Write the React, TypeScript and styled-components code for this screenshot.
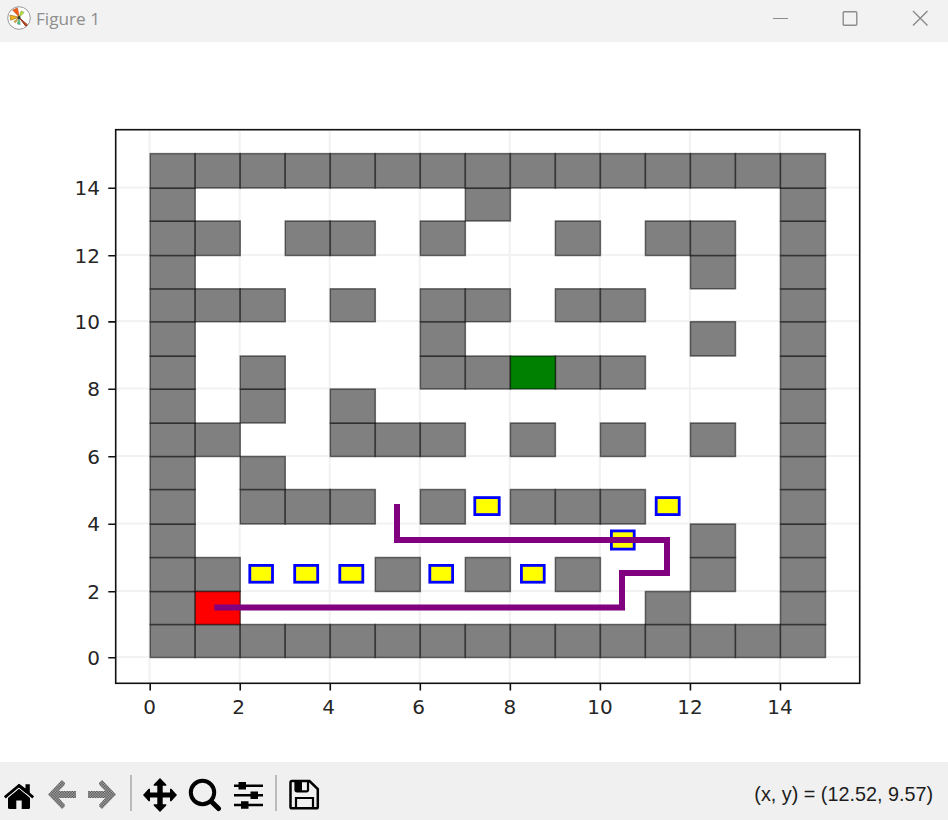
import React from 'react';
import styled, { createGlobalStyle } from 'styled-components';

const GlobalStyle = createGlobalStyle`
  * { box-sizing: border-box; }
  body { margin: 0; background: #fff; overflow: hidden; }
`;

const Window = styled.div`
  display: flex;
  flex-direction: column;
  width: 948px;
  height: 820px;
  background: #fff;
`;

const TitleBar = styled.header`
  display: flex;
  align-items: center;
  height: 42px;
  padding: 0 20px 6px 7px;
  background: #f2f2f2;
`;

const Title = styled.h1`
  flex: 1;
  margin: 1px 0 0 5px;
  font: 400 17.2px/24px "Open Sans", "Noto Sans", sans-serif;
  color: #8e8e8e;
`;

const Controls = styled.div`
  display: flex;
  gap: 54px;
`;

const Glyph = styled.svg<{ $w: number; $h: number }>`
  display: block;
  flex: none;
  width: ${(p) => p.$w}px;
  height: ${(p) => p.$h}px;
`;

const Canvas = styled.main`
  height: 720px;
`;

const Plot = styled.svg`
  display: block;
  width: 948px;
  height: 720px;
`;

const TickLabel = styled.text`
  font: 20px "DejaVu Sans", sans-serif;
  fill: #262626;
`;

const Toolbar = styled.footer`
  display: flex;
  align-items: center;
  height: 58px;
  padding: 4px 15px 0 1px;
  background: #f0f0f0;
`;

const ToolButton = styled.button<{ $w: number }>`
  display: flex;
  align-items: center;
  justify-content: center;
  width: ${(p) => p.$w}px;
  height: 36px;
  margin: 3px 0 0;
  padding: 0;
  border: 0;
  background: none;
`;

const Separator = styled.span<{ $before: number; $after: number }>`
  width: 2px;
  height: 36px;
  margin: 0 ${(p) => p.$after}px 0 ${(p) => p.$before}px;
  background: #bababa;
`;

const Status = styled.output`
  margin: 2px 0 0 auto;
  font: 19.8px/30px "Liberation Sans", Arial, sans-serif;
  color: #1c1c1c;
  white-space: nowrap;
`;

const ALL = [0, 1, 2, 3, 4, 5, 6, 7, 8, 9, 10, 11, 12, 13, 14];

// Wall columns for each row, bottom row first.
const WALLS: number[][] = [
  ALL,
  [0, 11, 14],
  [0, 1, 5, 7, 9, 12, 14],
  [0, 12, 14],
  [0, 2, 3, 4, 6, 8, 9, 10, 14],
  [0, 2, 14],
  [0, 1, 4, 5, 6, 8, 10, 12, 14],
  [0, 2, 4, 14],
  [0, 2, 6, 7, 9, 10, 14],
  [0, 6, 12, 14],
  [0, 1, 2, 4, 6, 7, 9, 10, 14],
  [0, 12, 14],
  [0, 1, 3, 4, 6, 9, 11, 12, 14],
  [0, 7, 14],
  ALL,
];

const ROW_Y = [657.5, 624.5, 591.5, 557.5, 524, 489.5, 456.5, 423, 389, 356, 321.7, 288.8, 255.5, 221, 188, 153.6];
const colX = (n: number) => 150.2 + n * 45.02;

// Outer left, top, width and height of each marker.
const MARKERS: [number, number, number, number][] = [
  [248.4, 564, 25.5, 19.6],
  [293.3, 564, 25.8, 19.6],
  [338.4, 564, 25.8, 19.6],
  [428.4, 564, 25.6, 19.6],
  [520, 564, 25.6, 19.6],
  [473.4, 496.2, 27.2, 19.8],
  [654.8, 496.2, 25.8, 19.8],
  [610, 529.5, 25.6, 21],
];

const TICKS = [0, 2, 4, 6, 8, 10, 12, 14];

const Cell = ({ col, row, fill }: { col: number; row: number; fill: string }) => (
  <rect
    x={colX(col)}
    y={ROW_Y[row + 1]}
    width={colX(col + 1) - colX(col)}
    height={ROW_Y[row] - ROW_Y[row + 1]}
    fill={fill}
    stroke="#000"
    strokeOpacity=".52"
    strokeWidth="1.5"
  />
);

const Maze = () => (
  <Plot viewBox="0 42 948 720">
    <g stroke="#f2f2f2" strokeWidth="2.2">
      {TICKS.map((t) => (
        <path key={t} d={`M${colX(t) - 0.6} 130V683M116 ${ROW_Y[t] - 0.5}H859`} />
      ))}
    </g>
    {WALLS.map((cols, row) => cols.map((col) => <Cell key={`${row}-${col}`} col={col} row={row} fill="#808080" />))}
    <Cell col={8} row={8} fill="#008000" />
    <Cell col={1} row={1} fill="#f00" />
    {MARKERS.map(([x, y, w, h]) => (
      <rect key={`${x}-${y}`} x={x + 1.4} y={y + 1.4} width={w - 2.8} height={h - 2.8} fill="#ff0" stroke="#00f" strokeWidth="2.8" />
    ))}
    <path d="M217.3 607.4H622V573H667V540H397V507" fill="none" stroke="#800080" strokeWidth="6" strokeLinecap="square" />
    <g stroke="#111" strokeWidth="1.6" fill="none">
      <rect x="115.7" y="129.7" width="744" height="553.6" />
      {TICKS.map((t) => (
        <path key={t} d={`M${colX(t)} 683V690.6M108.3 ${ROW_Y[t] + 0.2}H115.7`} />
      ))}
    </g>
    {TICKS.map((t) => (
      <React.Fragment key={t}>
        <TickLabel x={colX(t) - (t === 0 || t >= 8 ? 0.5 : 1.6)} y="713.5" textAnchor="middle">{t}</TickLabel>
        <TickLabel x="100" y={ROW_Y[t] + 7} textAnchor="end">{t}</TickLabel>
      </React.Fragment>
    ))}
  </Plot>
);

const AppIcon = () => (
  <Glyph $w={24} $h={24} viewBox="0 0 24 24">
    <circle cx="12" cy="12" r="11.3" fill="#fff" stroke="#999" />
    <path d="M12.5 11.5L5.5 4L10.5 1.8Z" fill="#f45a16" stroke="#a65d33" strokeWidth=".5" />
    <path d="M12 11.2L3.6 14.2L3 9Z" fill="#f4b51b" stroke="#9c7626" strokeWidth=".7" />
    <path d="M12 11.5L14 5L17.2 6.4Z" fill="#b8e63a" stroke="#819a40" strokeWidth=".6" />
    <path d="M12 11.5L13.2 18.5L10.4 18Z" fill="#52cf92" stroke="#4c8e68" strokeWidth=".6" />
    <path d="M12 11.5L20.2 18.6L18.8 20.2Z" fill="#d84919" stroke="#8c3a20" strokeWidth="1" />
    <path d="M12 11.5L8.5 16.8L6.8 15.6Z" fill="#e1a843" stroke="#9c7626" strokeWidth=".5" />
    <circle cx="12" cy="11.5" r="1.5" fill="#333" />
  </Glyph>
);

const ARROW = 'M1 15.5L14.8 1L18 3.7L17.8 5.8L11.8 12H29V19H11.8L17.8 25.5V27.5L15 30Z';

const DitheredArrow = ({ id, flip }: { id: string; flip?: boolean }) => (
  <Glyph $w={30} $h={31} viewBox="0 0 30 31">
    <defs>
      <pattern id={id} width="2.6" height="2.6" patternUnits="userSpaceOnUse">
        <rect width="2.6" height="2.6" fill="#b4b4b4" />
        <path d="M0 0H1.3V1.3H0ZM1.3 1.3H2.6V2.6H1.3Z" fill="#484848" />
      </pattern>
    </defs>
    <path d={ARROW} fill={`url(#${id})`} transform={flip ? 'translate(30 0) scale(-1 1)' : undefined} />
  </Glyph>
);

export default function App() {
  return (
    <>
      <GlobalStyle />
      <Window>
        <TitleBar>
          <AppIcon />
          <Title>Figure 1</Title>
          <Controls>
            <Glyph $w={16} $h={16} viewBox="0 0 16 16">
              <path d="M1 8.5H16" stroke="#8c8c8c" />
            </Glyph>
            <Glyph $w={16} $h={16} viewBox="0 0 16 16">
              <rect x="1.2" y="1.7" width="13.6" height="13.6" rx="1" fill="none" stroke="#8c8c8c" strokeWidth="1.4" />
            </Glyph>
            <Glyph $w={16} $h={16} viewBox="0 0 16 16">
              <path d="M1 1L15.5 15.5M15.5 1L1 15.5" stroke="#858585" strokeWidth="1.3" />
            </Glyph>
          </Controls>
        </TitleBar>
        <Canvas>
          <Maze />
        </Canvas>
        <Toolbar>
          <ToolButton $w={36} aria-label="Home">
            <Glyph $w={32} $h={36} viewBox="3 777 32 36">
              <path d="M8 797.5L19 788.5L30 797.5V807.5Q30 809 28.5 809H21.7V800.5H16.3V809H9.5Q8 809 8 807.5Z" />
              <path d="M4.8 797.4L19 785.6L33.2 797.4" fill="none" stroke="#000" strokeWidth="2.7" />
              <path d="M18 784.4H20L25.5 788.5V784.3H29.8V793H25L19 788Z" />
              <path d="M7 798.2L19 788.2L31 798.2" fill="none" stroke="#f0f0f0" strokeWidth="1" />
            </Glyph>
          </ToolButton>
          <ToolButton $w={49} aria-label="Back"><DitheredArrow id="back-dither" /></ToolButton>
          <ToolButton $w={32} aria-label="Forward"><DitheredArrow id="forward-dither" flip /></ToolButton>
          <Separator $before={12} $after={9} />
          <ToolButton $w={38} aria-label="Pan">
            <Glyph $w={36} $h={36} viewBox="0 0 36 36">
              <path d="M18 1L24.3 7.5V8.7H20.7V15.5H28V11.7H29.3L35 18L29.3 24.3H28V20.5H20.7V27.3H24.3V28.5L18 35L11.7 28.5V27.3H15.3V20.5H8V24.3H6.7L1 18L6.7 11.7H8V15.5H15.3V8.7H11.7V7.5Z" />
            </Glyph>
          </ToolButton>
          <ToolButton $w={52} aria-label="Zoom">
            <Glyph $w={34} $h={36} viewBox="0 0 34 36">
              <circle cx="14.5" cy="15.5" r="11.7" fill="none" stroke="#000" strokeWidth="4" />
              <path d="M23.3 24.5L30.5 31.5" stroke="#000" strokeWidth="5" strokeLinecap="round" />
            </Glyph>
          </ToolButton>
          <ToolButton $w={35} aria-label="Configure subplots">
            <Glyph $w={31} $h={36} viewBox="0 0 31 36">
              <path d="M1 8.7H30M1 18.3H30M1 28H30" stroke="#000" strokeWidth="2.5" />
              <path d="M5.5 5H13V12.4H5.5ZM17.5 14.6H25V22H17.5ZM8 24.3H15.5V31.7H8Z" />
            </Glyph>
          </ToolButton>
          <Separator $before={9} $after={9} />
          <ToolButton $w={36} aria-label="Save">
            <Glyph $w={32} $h={36} viewBox="0 0 32 36">
              <path d="M4 4H21.5L29.8 12V30Q29.8 31.3 28.5 31.3H4Q2.5 31.3 2.5 30V5.5Q2.5 4 4 4Z" fill="none" stroke="#000" strokeWidth="2.5" />
              <path d="M7.5 4V13Q7.5 14.3 9 14.3H18.5Q20 14.3 20 13V4M8 31V21H25V31" fill="none" stroke="#000" strokeWidth="2.2" />
              <path d="M8 4H14V14H8Z" />
            </Glyph>
          </ToolButton>
          <Status>(x, y) = (12.52, 9.57)</Status>
        </Toolbar>
      </Window>
    </>
  );
}
